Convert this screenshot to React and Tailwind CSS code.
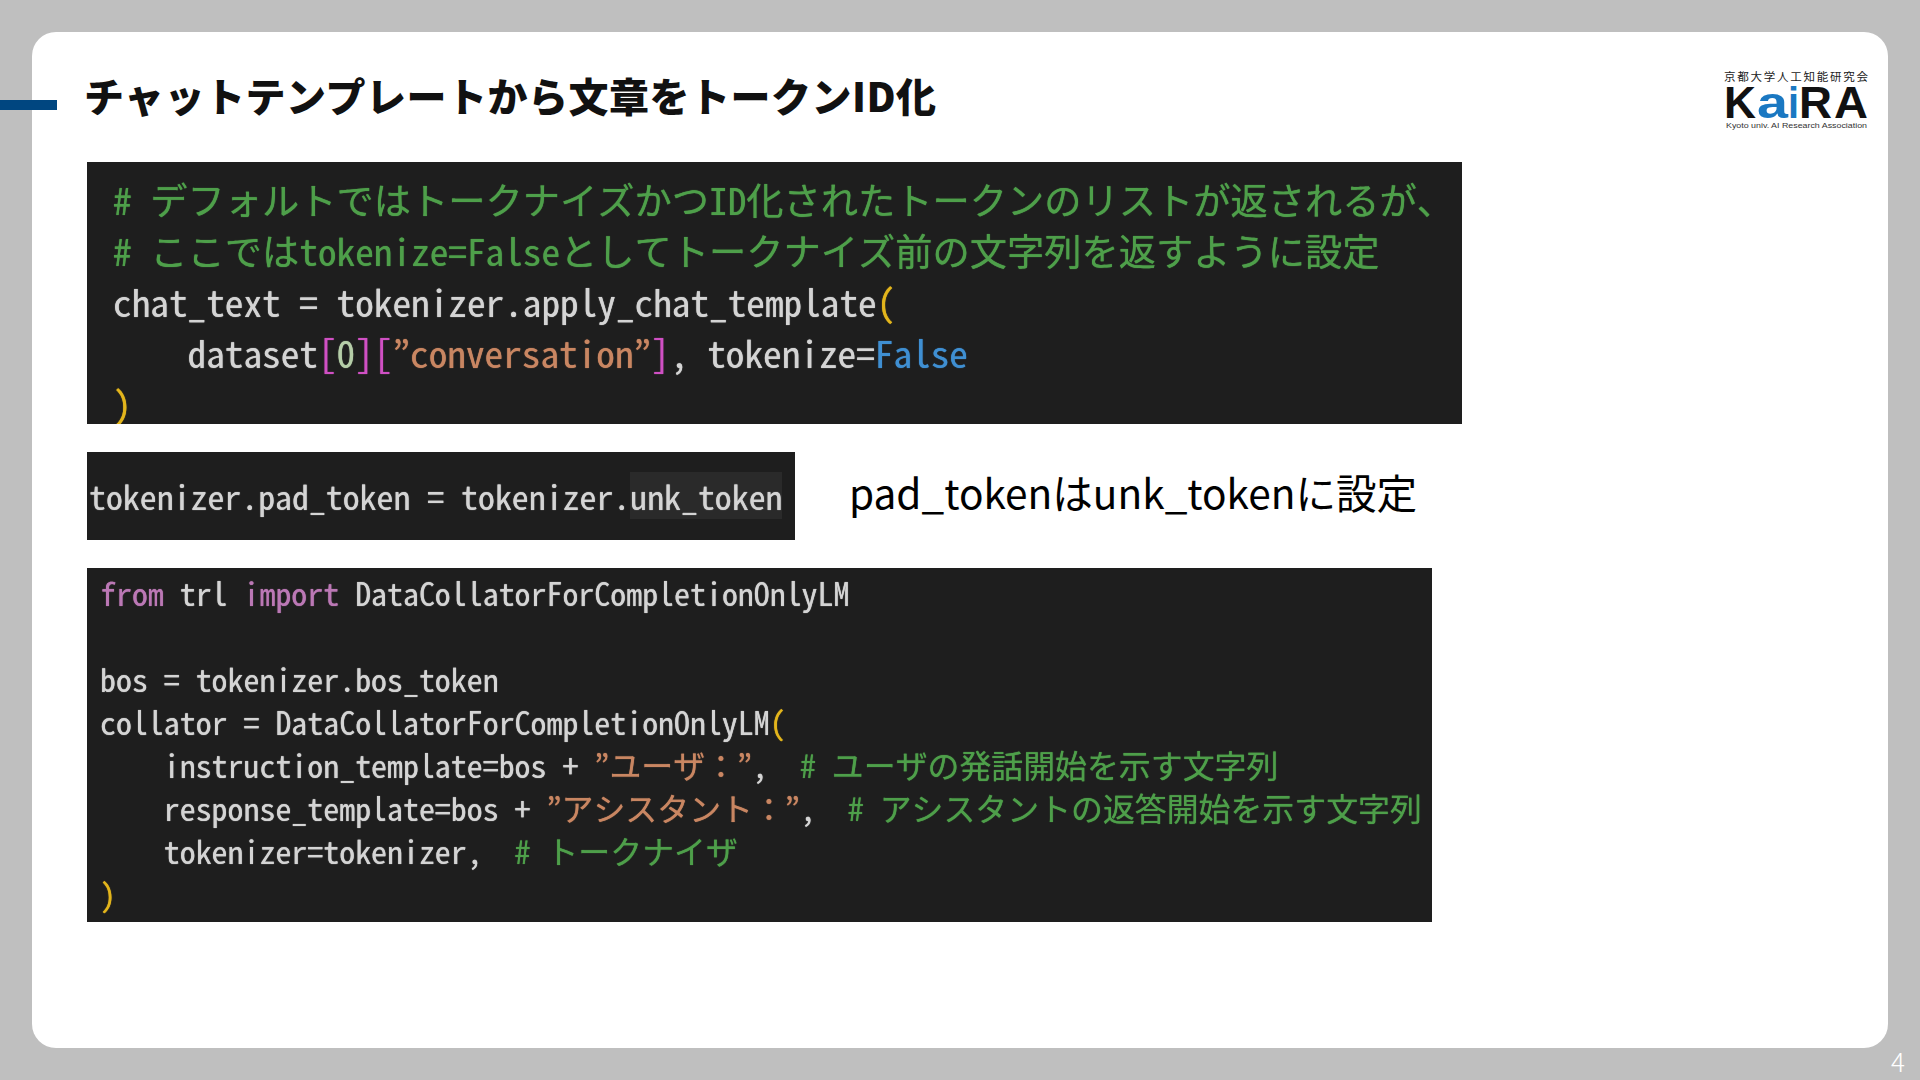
const mono = "font-['Noto_Sans_Mono_CJK_JP','Noto_Sans_CJK_JP',monospace] whitespace-pre text-[#d4d4d4] blur-[0.5px] [text-shadow:0_0_1px_currentColor]";

const Cm = ({ children }) => <span className="text-[#4e9f4a]">{children}</span>;
const Str = ({ children }) => <span className="text-[#c98662]">{children}</span>;
const Gold = ({ children }) => <span className="text-[#e3b51c]">{children}</span>;
const Pink = ({ children }) => <span className="text-[#d050c4]">{children}</span>;
const Kw = ({ children }) => <span className="text-[#bb78b5]">{children}</span>;

function Logo() {
  const letter = "font-['Liberation_Sans',sans-serif] font-bold";
  return (
    <svg width="146" height="64" viewBox="0 0 146 64" className="-mt-[2px]">
      <text x="0" y="12.5" textLength="144" lengthAdjust="spacing" fontSize="11.5" fill="#222" className="font-['Noto_Sans_CJK_JP',sans-serif]">京都大学人工知能研究会</text>
      <text x="0" y="50" textLength="32" lengthAdjust="spacingAndGlyphs" fontSize="44" fill="#111" className={letter}>K</text>
      <text x="33" y="50" textLength="31" lengthAdjust="spacingAndGlyphs" fontSize="44" fill="#1a78c2" className={letter}>a</text>
      <text x="64" y="50" textLength="11" lengthAdjust="spacingAndGlyphs" fontSize="44" fill="#1a78c2" className={letter}>i</text>
      <text x="75" y="50" textLength="33" lengthAdjust="spacingAndGlyphs" fontSize="44" fill="#111" className={letter}>R</text>
      <text x="110" y="50" textLength="34" lengthAdjust="spacingAndGlyphs" fontSize="44" fill="#111" className={letter}>A</text>
      <text x="2" y="60" textLength="141" lengthAdjust="spacingAndGlyphs" fontSize="7.5" fill="#333" className="font-['Liberation_Sans',sans-serif]">Kyoto univ. AI Research Association</text>
    </svg>
  );
}

export default function App() {
  return (
    <div className="relative w-full h-screen overflow-hidden bg-[#bfbfbf] pt-[32px]">
      {/* accent bar crossing the card edge */}
      <div className="absolute left-0 top-[100px] w-[57px] h-[10px] bg-[#004680]" />

      <div className="mx-[32px] h-[1016px] bg-white rounded-[24px] pl-[55px] pr-[18px] flex flex-col">
        <div className="h-[130px] flex items-start justify-between shrink-0">
          <h1 className="mt-[38px] -ml-[3px] text-[40px] leading-[50px] tracking-[0.5px] font-black text-[#111] font-['Noto_Sans_CJK_JP',sans-serif]">
            チャットテンプレートから文章をトークンID化
          </h1>
          <div className="mt-[38px]">
            <Logo />
          </div>
        </div>

        <div className={`w-[1375px] h-[262px] bg-[#1e1e1e] overflow-hidden pl-[26px] pt-[12px] text-[37.25px] leading-[51px] shrink-0 ${mono}`}>
          <div><Cm># デフォルトではトークナイズかつID化されたトークンのリストが返されるが、</Cm></div>
          <div><Cm># ここではtokenize=Falseとしてトークナイズ前の文字列を返すように設定</Cm></div>
          <div>chat_text = tokenizer.apply_chat_template<Gold>(</Gold></div>
          <div>    dataset<Pink>[</Pink><span className="text-[#b5cea8]">0</span><Pink>][</Pink><Str>”conversation”</Str><Pink>]</Pink>, tokenize=<span className="text-[#3f8fd2]">False</span></div>
          <div><Gold>)</Gold></div>
        </div>

        <div className="mt-[28px] flex items-center shrink-0">
          <div className={`w-[708px] h-[88px] bg-[#1e1e1e] flex items-center pl-[2px] pb-[2px] text-[33.85px] leading-[47px] ${mono}`}>
            tokenizer.pad_token = tokenizer.<span className="bg-[#2a2a2a]">unk_token</span>
          </div>
          <p className="ml-[54px] mb-[7px] text-[40.6px] text-black font-['Noto_Sans_CJK_JP',sans-serif]">pad_tokenはunk_tokenに設定</p>
        </div>

        <div className={`mt-[28px] w-[1345px] h-[354px] bg-[#1e1e1e] overflow-hidden pl-[13px] pt-[3px] text-[31.9px] leading-[43px] shrink-0 ${mono}`}>
          <div><Kw>from</Kw> trl <Kw>import</Kw> DataCollatorForCompletionOnlyLM</div>
          <div>&nbsp;</div>
          <div>bos = tokenizer.bos_token</div>
          <div>collator = DataCollatorForCompletionOnlyLM<Gold>(</Gold></div>
          <div>    instruction_template=bos + <Str>”ユーザ：”</Str>,  <Cm># ユーザの発話開始を示す文字列</Cm></div>
          <div>    response_template=bos + <Str>”アシスタント：”</Str>,  <Cm># アシスタントの返答開始を示す文字列</Cm></div>
          <div>    tokenizer=tokenizer,  <Cm># トークナイザ</Cm></div>
          <div><Gold>)</Gold></div>
        </div>
      </div>

      <div className="flex justify-end pr-[15px] text-[26px] leading-[26px] text-white font-['Noto_Sans_CJK_JP',sans-serif] font-light">4</div>
    </div>
  );
}
